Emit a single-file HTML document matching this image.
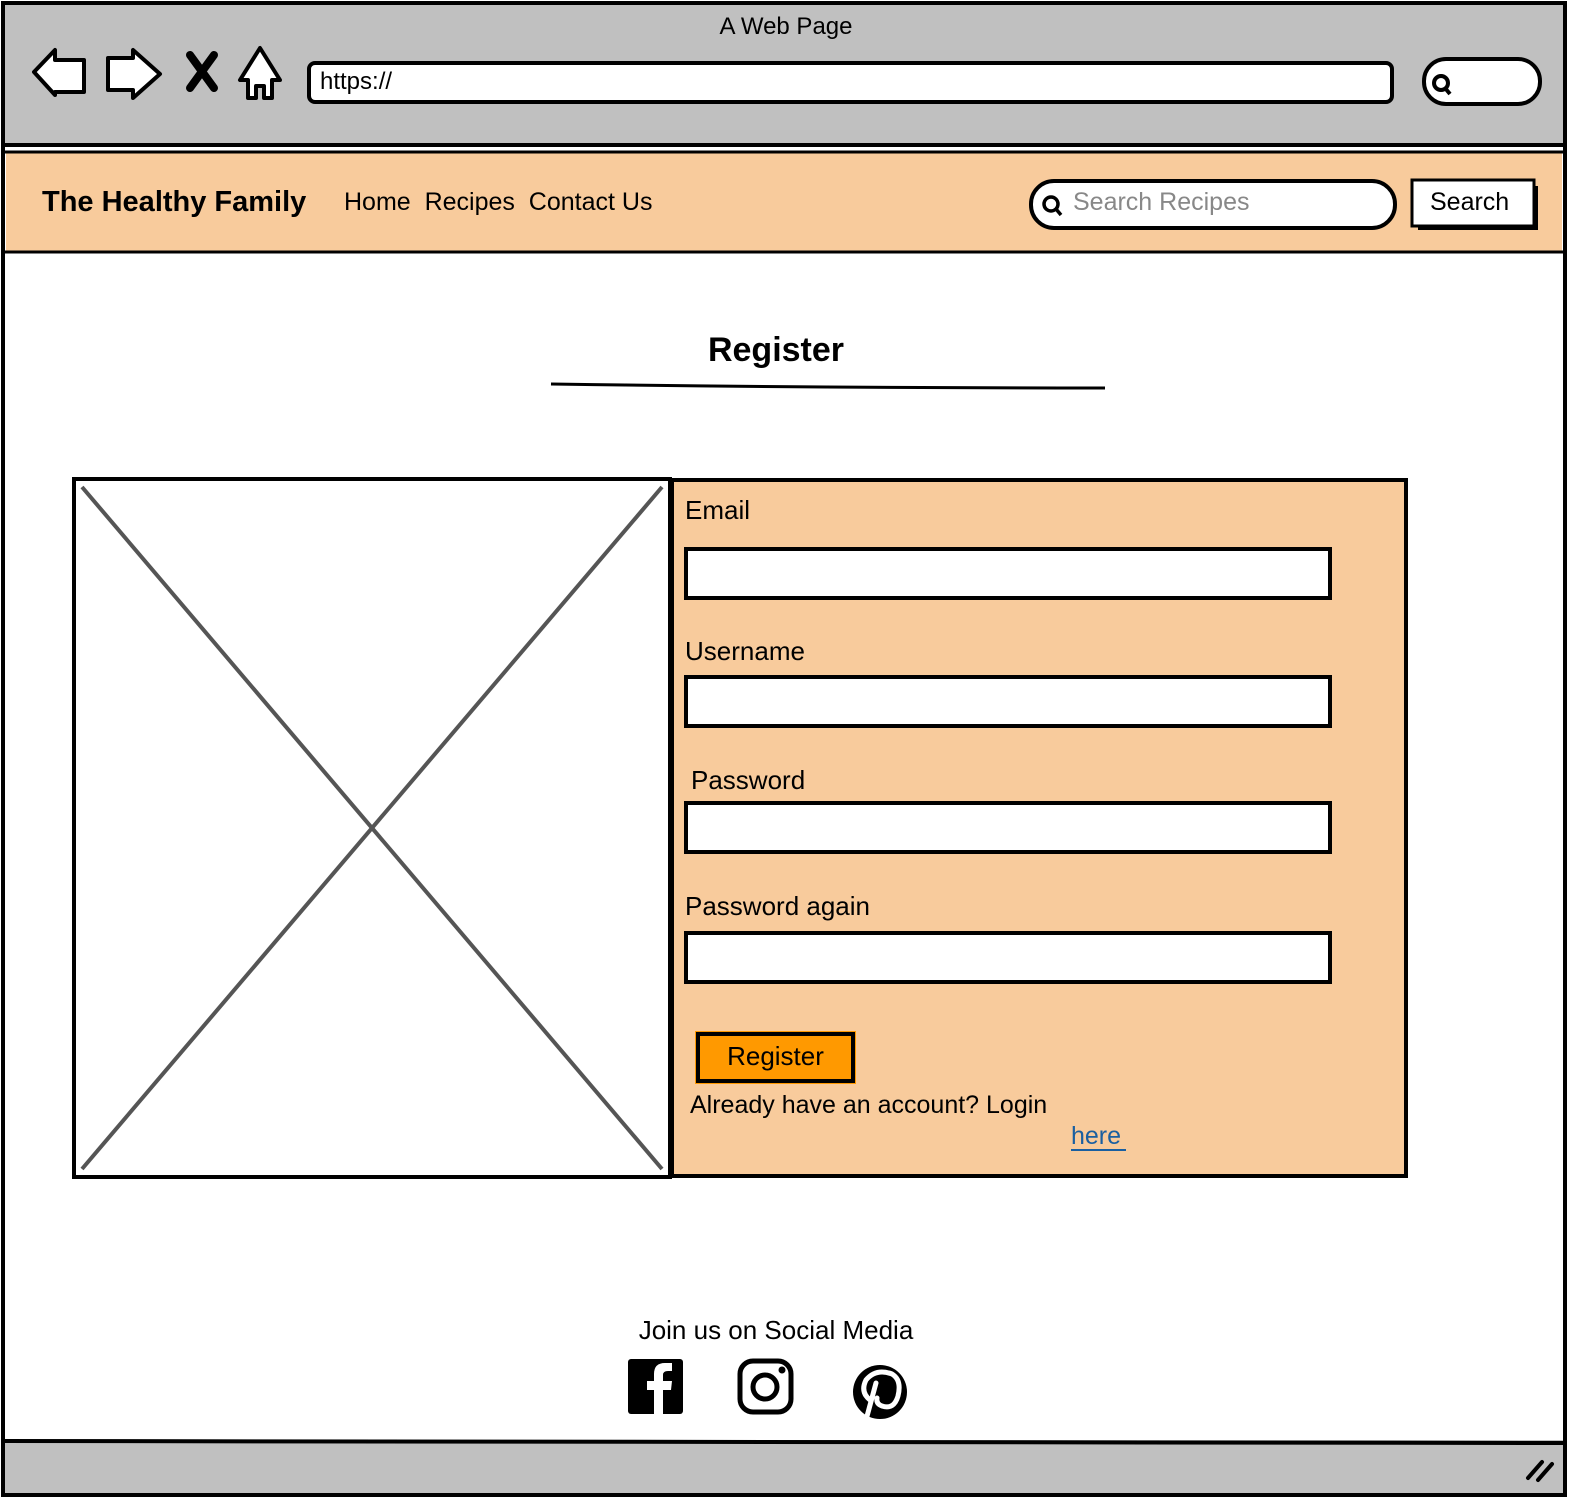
<!DOCTYPE html>
<html><head><meta charset="utf-8"><style>
html,body{margin:0;padding:0;width:1572px;height:1500px;overflow:hidden;background:#fff;font-family:"Liberation Sans",sans-serif;}
.t{position:absolute;white-space:nowrap;color:#000;line-height:1;}
</style></head><body>
<svg width="1572" height="1500" style="position:absolute;left:0;top:0">
<rect x="3" y="3" width="1562" height="142" fill="#c0c0c0"/>
<rect x="6" y="153" width="1556" height="99" fill="#f8cb9c"/>
<rect x="3" y="1440" width="1562" height="55" fill="#c0c0c0"/>
<rect x="3" y="3" width="1562" height="1492" fill="none" stroke="#000" stroke-width="4"/>
<line x1="3" y1="145" x2="1565" y2="145" stroke="#000" stroke-width="4"/>
<line x1="3" y1="152" x2="1565" y2="152" stroke="#000" stroke-width="3"/>
<line x1="3" y1="252" x2="1565" y2="252" stroke="#000" stroke-width="3"/>
<line x1="3" y1="1441" x2="1565" y2="1443" stroke="#000" stroke-width="4"/>
<!-- browser icons -->
<path d="M34 72 L55 50 L55 60 L84 60 L84 92 L55 92 L55 95 Z" fill="#fff" stroke="#000" stroke-width="4" stroke-linejoin="round"/>
<path d="M160 74 L133 50 L133 58 L108 58 L108 90 L133 90 L133 98 Z" fill="#fff" stroke="#000" stroke-width="4" stroke-linejoin="round"/>
<path d="M190 55 L214 88 M214 55 L190 88" stroke="#000" stroke-width="8" stroke-linecap="round"/>
<path d="M260 48 L240 80 L248 80 L248 98 L256 98 L256 86 L264 86 L264 98 L272 98 L272 80 L280 80 Z" fill="#fff" stroke="#000" stroke-width="4" stroke-linejoin="round"/>
<rect x="309" y="63" width="1083" height="39" rx="6" fill="#fff" stroke="#000" stroke-width="4"/>
<rect x="1424" y="59" width="116" height="45" rx="22" fill="#fff" stroke="#000" stroke-width="4"/>
<circle cx="1441" cy="83" r="7" fill="none" stroke="#000" stroke-width="4"/>
<line x1="1445" y1="88" x2="1450" y2="94" stroke="#000" stroke-width="4"/>
<!-- nav search -->
<rect x="1031" y="181" width="364" height="47" rx="23" fill="#fff" stroke="#000" stroke-width="4"/>
<circle cx="1051" cy="204" r="7" fill="none" stroke="#000" stroke-width="3.5"/>
<line x1="1056" y1="209" x2="1061" y2="215" stroke="#000" stroke-width="3.5"/>
<rect x="1418" y="186" width="120" height="44" fill="#000"/>
<rect x="1412" y="180" width="122" height="46" fill="#fff" stroke="#000" stroke-width="3"/>
<!-- heading line -->
<path d="M551 384 Q830 388 1105 388" stroke="#000" stroke-width="3" fill="none"/>
<!-- image placeholder -->
<rect x="74" y="479" width="596" height="698" fill="#fff" stroke="#000" stroke-width="4"/>
<line x1="82" y1="487" x2="662" y2="1169" stroke="#555" stroke-width="4"/>
<line x1="662" y1="487" x2="82" y2="1169" stroke="#555" stroke-width="4"/>
<!-- form -->
<rect x="672" y="480" width="734" height="696" fill="#f8cb9c" stroke="#000" stroke-width="4"/>
<line x1="671" y1="479" x2="671" y2="1177" stroke="#000" stroke-width="6"/>
<rect x="686" y="549" width="644" height="49" fill="#fff" stroke="#000" stroke-width="4"/>
<rect x="686" y="677" width="644" height="49" fill="#fff" stroke="#000" stroke-width="4"/>
<rect x="686" y="803" width="644" height="49" fill="#fff" stroke="#000" stroke-width="4"/>
<rect x="686" y="933" width="644" height="49" fill="#fff" stroke="#000" stroke-width="4"/>
<rect x="695" y="1031" width="161" height="53" fill="#ff9900"/>
<rect x="698" y="1034" width="155" height="47" fill="none" stroke="#000" stroke-width="4"/>
<line x1="1071" y1="1150" x2="1126" y2="1150" stroke="#1a5fa0" stroke-width="2"/>
<!-- social -->
<rect x="628" y="1359" width="55" height="55" rx="3" fill="#000"/>
<path d="M663 1414 V1390 H671 L672 1381 H663 V1375 Q663 1371 668 1371 H672 V1363 H665 Q654 1363 654 1374 V1381 H647 V1390 H654 V1414 Z" fill="#fff"/>
<rect x="740" y="1361" width="51" height="51" rx="13" fill="none" stroke="#000" stroke-width="5"/>
<circle cx="765" cy="1387" r="12" fill="none" stroke="#000" stroke-width="5"/>
<circle cx="782" cy="1370" r="3.5" fill="#000"/>
<circle cx="880" cy="1392" r="27" fill="#000"/>
<path d="M876 1383 L866 1420 M870 1400 Q860 1392 866 1380 Q876 1368 892 1374 Q902 1380 898 1396 Q894 1410 882 1406 Q876 1404 877 1398" stroke="#fff" stroke-width="5" fill="none" stroke-linecap="round"/>
<path d="M1528 1478 L1542 1462 M1538 1480 L1552 1464" stroke="#000" stroke-width="4" stroke-linecap="round"/>
</svg>
<div class="t" style="left:0;width:1572px;text-align:center;top:15px;font-size:24px">A Web Page</div>
<div class="t" style="left:320px;top:70px;font-size:24px">https://</div>
<div class="t" style="left:42px;top:188px;font-size:29px;font-weight:bold">The Healthy Family</div>
<div class="t" style="left:344px;top:190px;font-size:25px">Home&nbsp; Recipes&nbsp; Contact Us</div>
<div class="t" style="left:1073px;top:190px;font-size:25px;color:#888">Search Recipes</div>
<div class="t" style="left:1430px;top:190px;font-size:25px">Search</div>
<div class="t" style="left:0;width:1552px;text-align:center;top:333px;font-size:34px;font-weight:bold">Register</div>
<div class="t" style="left:685px;top:497px;font-size:26px">Email</div>
<div class="t" style="left:685px;top:638px;font-size:26px">Username</div>
<div class="t" style="left:691px;top:767px;font-size:26px">Password</div>
<div class="t" style="left:685px;top:893px;font-size:26px">Password again</div>
<div class="t" style="left:698px;width:155px;text-align:center;top:1043px;font-size:26px">Register</div>
<div class="t" style="left:690px;top:1093px;font-size:25px">Already have an account? Login</div>
<div class="t" style="left:1071px;top:1124px;font-size:25px;color:#1a5fa0">here</div>
<div class="t" style="left:0;width:1552px;text-align:center;top:1317px;font-size:26px">Join us on Social Media</div>
</body></html>
